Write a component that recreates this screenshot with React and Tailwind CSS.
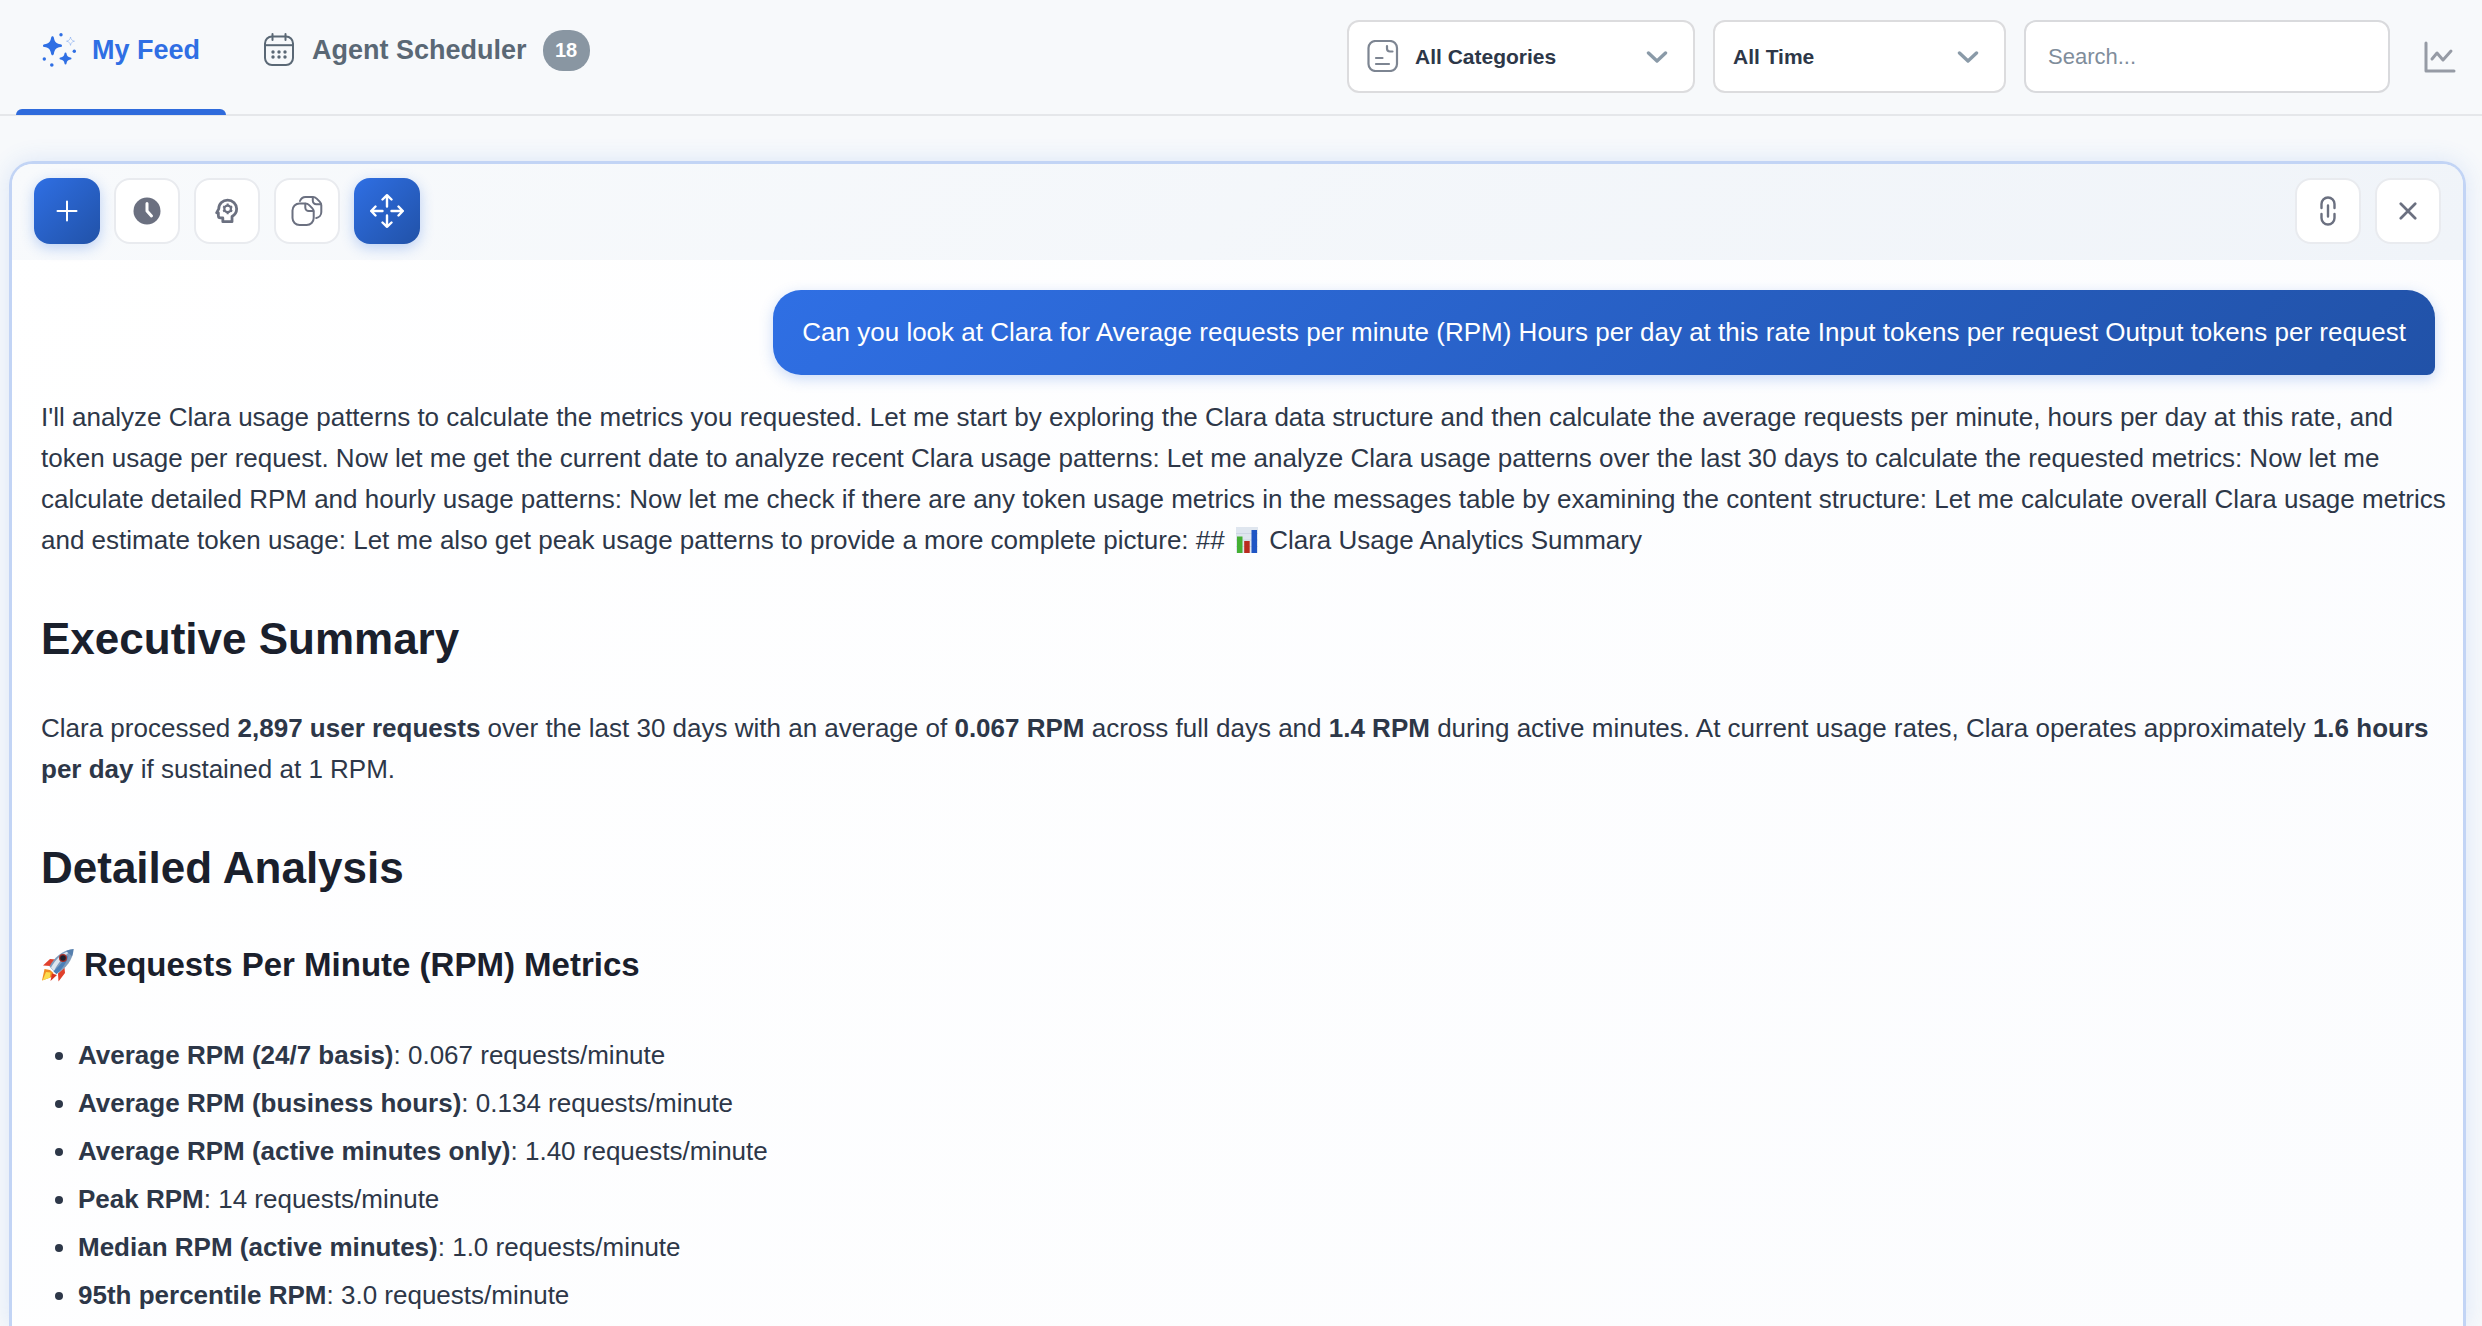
const metrics = [
  { label: "Average RPM (24/7 basis)", value: "0.067 requests/minute" },
  { label: "Average RPM (business hours)", value: "0.134 requests/minute" },
  { label: "Average RPM (active minutes only)", value: "1.40 requests/minute" },
  { label: "Peak RPM", value: "14 requests/minute" },
  { label: "Median RPM (active minutes)", value: "1.0 requests/minute" },
  { label: "95th percentile RPM", value: "3.0 requests/minute" },
];

function SparklesIcon() {
  return (
    <svg className="h-[34px] w-[34px]" viewBox="0 0 34 34" fill="currentColor" aria-hidden="true">
      <path d="M10.5 3.2c.8 0 1.2.6 1.4 1.5.8 4.3 2.2 5.7 6.6 6.6.9.2 1.5.6 1.5 1.4s-.6 1.2-1.5 1.4c-4.4.9-5.8 2.3-6.6 6.6-.2.9-.6 1.5-1.4 1.5s-1.2-.6-1.4-1.5c-.8-4.3-2.2-5.7-6.6-6.6C1.6 14 1 13.5 1 12.7s.6-1.2 1.5-1.4c4.4-.9 5.8-2.3 6.6-6.6.2-.9.6-1.5 1.4-1.5z" />
      <path d="M23.5 19.500c.6 0 .9.400 1 1 .5 2.700 1.300 3.500 4 4 .6.100 1 .4 1 1s-.4.900-1 1c-2.700.5-3.500 1.300-4 4-.1.600-.4 1-1 1s-.9-.4-1-1c-.5-2.700-1.300-3.500-4-4-.6-.1-1-.4-1-1s.4-.9 1-1c2.700-.5 3.500-1.300 4-4 .1-.6.400-1 1-1z" />
      <path
        d="M28.500 4c.6 2.800 1.400 3.500 4 4.200-2.600.6-3.400 1.400-4 4.200-.6-2.800-1.400-3.600-4-4.200 2.600-.7 3.400-1.400 4-4.200z"
        fill="none"
        stroke="currentColor"
        strokeOpacity=".3"
      />
      <circle cx="19" cy="1.800" r="1.700" />
      <circle cx="32.300" cy="18.300" r="1.700" />
      <circle cx="2.300" cy="26" r="1.700" />
      <circle cx="9.800" cy="32" r="1.800" />
    </svg>
  );
}

function CalendarIcon() {
  return (
    <svg className="h-[34px] w-[34px]" viewBox="0 0 34 34" fill="none" stroke="currentColor" strokeWidth="2" aria-hidden="true">
      <rect x="3" y="3.500" width="28" height="28.500" rx="7" />
      <path d="M3 12.200h28" />
      <path d="M10.500 1v6M23.500 1v6" strokeLinecap="round" />
      <g fill="currentColor" stroke="none">
        <circle cx="11" cy="19" r="1.700" />
        <circle cx="17" cy="19" r="1.700" />
        <circle cx="23" cy="19" r="1.700" />
        <circle cx="11" cy="24" r="1.700" />
        <circle cx="17" cy="24" r="1.700" />
        <circle cx="23" cy="24" r="1.700" />
      </g>
    </svg>
  );
}

function Chevron() {
  return (
    <svg
      className="pointer-events-none absolute right-[26px] top-1/2 h-3 w-6 -translate-y-1/2"
      viewBox="0 0 24 12"
      fill="none"
      stroke="#8a9aa8"
      strokeWidth="3.400"
      strokeLinecap="round"
      strokeLinejoin="round"
      aria-hidden="true"
    >
      <path d="M3.500 2 12 10l8.500-8" />
    </svg>
  );
}

function BarChartEmoji() {
  return (
    <svg className="mx-1 inline-block h-[26px] w-[22px] align-[-4px]" viewBox="0 0 22 26" aria-hidden="true">
      <path d="M0 0h22v26H0z" fill="#dfe6ef" />
      <path d="M0 6.500h22M0 13h22M0 19.500h22" stroke="#c3cddb" strokeWidth=".6" />
      <path d="M1 9.500h5.500V26H1z" fill="#45b034" />
      <path d="M8.200 14h5.500v12H8.200z" fill="#b92b1f" />
      <path d="M15.500 3H21v23h-5.500z" fill="#1f55c4" />
    </svg>
  );
}

function RocketEmoji() {
  return (
    <svg className="mr-[9px] inline-block h-[34px] w-[34px] align-[-6px]" viewBox="0 0 34 34" aria-hidden="true">
      <path d="M9.500 18 2 17.500 9 11l6 .5zM17 25.500l.5 8L24 25l-.5-5.500z" fill="#e0402c" />
      <path d="M9 22 3.500 21 1 32.500 11 29l1.500-4z" fill="#f08c22" />
      <path d="M9.500 24.500 5 24 1.500 32.500l7.500-3z" fill="#fbdc4e" />
      <path d="M11 25.500 9.500 33 16 27z" fill="#d8331f" />
      <path d="M8.500 18.500C13 9.500 21 2.500 32.500 1 32 12 25 20.500 15.500 26z" fill="#7f9cbc" />
      <path d="M10 19.500C14.500 11 22 4 32.500 1c-7 4.500-14.500 12-19.500 22z" fill="#dde6ef" />
      <path d="M12.500 23.500C19 17 24 11 27.500 7c-1 6.500-6 13.500-12 19z" fill="#4b7fb8" />
      <path d="M25 2.900C27.500 1.900 30 1.300 32.500 1c-.1 2.600-.6 5-1.400 7.200z" fill="#557fae" />
      <circle cx="22" cy="10" r="4" fill="#a42e28" />
      <circle cx="22" cy="10" r="2.800" fill="#1c1f2b" />
    </svg>
  );
}

function ToolButton({ label, primary, children }) {
  return (
    <button
      type="button"
      aria-label={label}
      className={`flex size-[66px] items-center justify-center rounded-2xl ${
        primary
          ? "bg-linear-135 from-[#2f6fe4] to-[#2152a8] text-white shadow-[0_4px_14px_rgba(47,111,228,0.3)]"
          : "border-2 border-[#e9ebef] bg-white text-[#6b7080]"
      }`}
    >
      {children}
    </button>
  );
}

function Header() {
  return (
    <header className="flex items-start justify-between border-b-2 border-[#e5e7ea] pl-4 pr-[26px]">
      <nav className="flex gap-[10px] text-[27px] font-bold leading-8">
        <button type="button" className="relative flex h-[114px] items-center gap-4 px-[26px] pb-[14px] text-[#2f6fe4]">
          <SparklesIcon />
          My Feed
          <span className="absolute inset-x-0 -bottom-px h-[6px] rounded-t-md bg-[#2f6bdc]" />
        </button>
        <button type="button" className="flex h-[114px] items-center gap-4 px-[26px] pb-[14px] text-[#5a6875]">
          <CalendarIcon />
          Agent Scheduler
          <span className="flex h-[41px] w-[47px] items-center justify-center rounded-[20px] bg-[#8996a2] text-xl text-white">
            18
          </span>
        </button>
      </nav>
      <div className="flex items-center gap-[18px] pt-5">
        <div className="relative">
          <svg
            className="pointer-events-none absolute left-5 top-5 h-8 w-8"
            viewBox="0 0 32 32"
            fill="none"
            stroke="#7d8592"
            strokeWidth="2.200"
            strokeLinecap="round"
            aria-hidden="true"
          >
            <rect x="1.500" y="1" width="28.500" height="30" rx="7" />
            <path d="M20 6v2.500a3 3 0 0 0 3 3h2.500M9 18h6.500M9 24h13" />
          </svg>
          <select
            aria-label="Category"
            className="h-[73px] w-[348px] appearance-none rounded-xl border-2 border-[#dcdcde] bg-white pl-[66px] text-[21px] font-bold text-[#2d3748]"
          >
            <option>All Categories</option>
          </select>
          <Chevron />
        </div>
        <div className="relative">
          <select
            aria-label="Time range"
            className="h-[73px] w-[293px] appearance-none rounded-xl border-2 border-[#dcdcde] bg-white pl-[18px] text-[21px] font-bold text-[#2d3748]"
          >
            <option>All Time</option>
          </select>
          <Chevron />
        </div>
        <input
          type="search"
          aria-label="Search"
          placeholder="Search..."
          className="h-[73px] w-[366px] rounded-xl border-2 border-[#d9dadd] bg-white px-[22px] text-[22px] placeholder:text-[#7f8d9b]"
        />
        <button type="button" aria-label="Analytics" className="ml-4 text-[#969ba5]">
          <svg
            className="h-8 w-8"
            viewBox="0 0 32 32"
            fill="none"
            stroke="currentColor"
            strokeWidth="3"
            strokeLinecap="round"
            strokeLinejoin="round"
            aria-hidden="true"
          >
            <path d="M2 2v28h28" />
            <path d="M8 18l5-6 6 7 8-9" />
          </svg>
        </button>
      </div>
    </header>
  );
}

function Toolbar() {
  return (
    <div className="flex justify-between rounded-t-[20px] bg-linear-135 from-[#f8fafc] to-[#f0f4f9] px-[22px] pb-4 pt-[14px]">
      <div className="flex gap-[14px]">
        <ToolButton label="New" primary>
          <svg className="h-6 w-6" viewBox="0 0 24 24" fill="none" stroke="currentColor" strokeWidth="2" strokeLinecap="round">
            <path d="M12 2.500v19M2.500 12h19" />
          </svg>
        </ToolButton>
        <ToolButton label="History">
          <svg className="h-7 w-7" viewBox="0 0 28 28">
            <circle cx="14" cy="14" r="13.500" fill="currentColor" />
            <path d="M14 6.500V14l4.500 5" fill="none" stroke="#fff" strokeWidth="3" strokeLinecap="round" strokeLinejoin="round" />
          </svg>
        </ToolButton>
        <ToolButton label="Reasoning">
          <svg className="h-[26px] w-[26px]" viewBox="0 0 28 28" fill="none" stroke="currentColor" strokeWidth="3">
            <path
              d="M9.500 25.500v-4H7c-1.500 0-2.300-.8-2.300-2.300V16H2.800l2.300-4.300C5.200 6 9.500 2.300 14.700 2.300c5.500 0 9.700 4.200 9.700 9.400 0 3.800-2 6.600-5 8.300v5.500z"
              strokeLinejoin="round"
            />
            <circle cx="14.700" cy="11.700" r="3.600" strokeWidth="2.400" />
            <path
              d="M14.700 6v2.200M14.700 15.200v2.200M9.800 8.900l1.900 1.100M17.700 13.400l1.900 1.100M9.800 14.500l1.900-1.100M17.700 10l1.900-1.100"
              strokeWidth="2.200"
            />
          </svg>
        </ToolButton>
        <ToolButton label="Copy">
          <svg
            className="h-8 w-8"
            viewBox="0 0 32 32"
            fill="none"
            stroke="currentColor"
            strokeWidth="2"
            strokeLinejoin="round"
            strokeLinecap="round"
          >
            <path d="M1.500 15.500a7 7 0 0 1 7-7h5.800c1.500 0 2.800.5 3.900 1.600l3 3c1 1 1.500 2.300 1.500 3.700V23a7 7 0 0 1-7 7H8.500a7 7 0 0 1-7-7z" />
            <path d="M14.300 8.700v3.800a3.500 3.500 0 0 0 3.500 3.500h4.700" />
            <path d="M9 6a6 6 0 0 1 5.500-4h7.300c1.500 0 2.800.5 3.900 1.600l3 3c1 1 1.600 2.300 1.600 3.700V17a6 6 0 0 1-5 6" />
            <path d="M21.800 2.200v3.600a3.500 3.500 0 0 0 3.500 3.500h4.700" />
          </svg>
        </ToolButton>
        <ToolButton label="Expand" primary>
          <svg
            className="h-[34px] w-[34px]"
            viewBox="0 0 34 34"
            fill="none"
            stroke="currentColor"
            strokeWidth="2.400"
            strokeLinecap="round"
            strokeLinejoin="round"
          >
            <path d="M17 12.500V1.200M12.500 5.500l4.500-4.300 4.500 4.300" />
            <path d="M17 21.500v11.300M12.500 28.500l4.500 4.300 4.500-4.300" />
            <path d="M12.500 17H1.200M5.500 12.500 1.200 17l4.300 4.500" />
            <path d="M21.500 17h11.300M28.500 12.500l4.300 4.500-4.300 4.500" />
          </svg>
        </ToolButton>
      </div>
      <div className="flex gap-[14px]">
        <ToolButton label="Copy link">
          <svg className="h-[30px] w-4" viewBox="0 0 16 30" fill="none" stroke="currentColor" strokeWidth="2.400" strokeLinecap="round">
            <path d="M1.500 12V8a6.500 6.500 0 0 1 13 0v4M1.500 18v4a6.500 6.500 0 0 0 13 0v-4M8 9.500v11" />
          </svg>
        </ToolButton>
        <ToolButton label="Close">
          <svg className="h-[18px] w-[18px]" viewBox="0 0 20 20" fill="none" stroke="currentColor" strokeWidth="3" strokeLinecap="round">
            <path d="M2 2l16 16M18 2 2 18" />
          </svg>
        </ToolButton>
      </div>
    </div>
  );
}

export default function App() {
  return (
    <div className="flex min-h-screen flex-col bg-[#f7f9fb] font-['Liberation_Sans',Arial,sans-serif]">
      <Header />
      <main className="ml-[9px] mr-4 mt-[45px] flex flex-1 flex-col rounded-t-3xl border-[3px] border-b-0 border-[#c2d4f5] bg-linear-135 from-white to-[#fbfcfe] shadow-[0_0_24px_rgba(47,111,228,0.14)]">
        <Toolbar />
        <div className="flex flex-1 flex-col pl-[29px] pr-3 pt-[30px] text-[26px] leading-[41px] text-[#2d3748]">
          <div className="mb-[22px] mr-4 self-end rounded-[28px] rounded-br-lg bg-linear-135 from-[#2f6fe4] to-[#2152a8] px-[29px] py-[22px] text-white shadow-[0_4px_14px_rgba(47,111,228,0.25)]">
            Can you look at Clara for Average requests per minute (RPM) Hours per day at this rate Input tokens per request
            Output tokens per request
          </div>
          <p>
            I'll analyze Clara usage patterns to calculate the metrics you requested. Let me start by exploring the Clara
            data structure and then calculate the average requests per minute, hours per day at this rate, and token usage
            per request. Now let me get the current date to analyze recent Clara usage patterns: Let me analyze Clara usage
            patterns over the last 30 days to calculate the requested metrics: Now let me calculate detailed RPM and hourly
            usage patterns: Now let me check if there are any token usage metrics in the messages table by examining the
            content structure: Let me calculate overall Clara usage metrics and estimate token usage: Let me also get peak
            usage patterns to provide a more complete picture: ## <BarChartEmoji /> Clara Usage Analytics Summary
          </p>
          <h2 className="mb-[43px] mt-[52px] text-[44px] font-bold leading-[52px] text-[#1a202c]">Executive Summary</h2>
          <p>
            Clara processed <strong>2,897 user requests</strong> over the last 30 days with an average of{" "}
            <strong>0.067 RPM</strong> across full days and <strong>1.4 RPM</strong> during active minutes. At current
            usage rates, Clara operates approximately <strong>1.6 hours per day</strong> if sustained at 1 RPM.
          </p>
          <h2 className="mb-[51px] mt-[52px] text-[44px] font-bold leading-[52px] text-[#1a202c]">Detailed Analysis</h2>
          <h3 className="mb-[50px] text-[33px] font-bold leading-10 text-[#1a202c]">
            <RocketEmoji />
            Requests Per Minute (RPM) Metrics
          </h3>
          <ul className="flex flex-col gap-[7px]">
            {metrics.map((metric) => (
              <li key={metric.label} className="flex items-center pl-[14px]">
                <span className="mr-[15px] size-2 rounded-full bg-[#2d3748]" />
                <span>
                  <strong>{metric.label}</strong>: {metric.value}
                </span>
              </li>
            ))}
          </ul>
        </div>
      </main>
    </div>
  );
}
